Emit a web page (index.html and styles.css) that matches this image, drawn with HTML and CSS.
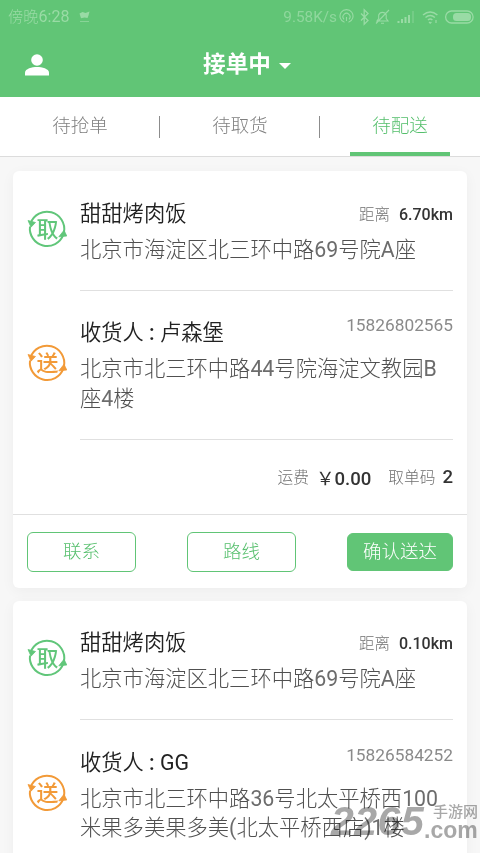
FILE: index.html
```html
<!DOCTYPE html>
<html lang="zh-CN">
<head>
<meta charset="utf-8">
<title>接单中</title>
<link rel="stylesheet" href="styles.css">
</head>
<body>
<svg class="defs" width="0" height="0">
  <symbol id="cycle" viewBox="0 0 40 40">
    <path d="M3.700 14.100A17.300 17.300 0 0 1 37 23M36.300 25.900A17.300 17.300 0 0 1 3 17.500" fill="none" stroke="currentColor" stroke-width="2"/>
    <path d="M1 11.500l7.500 2-4.500 4.700zM37 21.300l2.800 5.700-8 .8z" fill="currentColor" stroke="currentColor" stroke-width=".8" stroke-linejoin="round"/>
  </symbol>
</svg>
<div class="screen">
  <header class="header">
    <div class="status">
      <span class="clock">傍晚<span class="time">6:28</span></span>
      <svg class="flag" width="14" height="14" viewBox="0 0 14 14"><path d="M1.500 3.500l3-1.500 3 1 4-1.500-1 4-1 2.500-3-.5-3.500.8z" fill="currentColor"/><path d="M2 11.500h9" stroke="currentColor" opacity=".7"/></svg>
      <span class="speed">9.58K/s</span>
      <svg class="status-icons" width="136" height="18" viewBox="0 0 136 18" fill="none" stroke="currentColor" stroke-width="1.1">
        <path d="M5.500 14.300a6.500 6.500 0 1 1 4 0M5 11.300a3.500 3.500 0 1 1 5 0M7.500 9v4"/>
        <path d="M22 5.500l7 7-3.800 3.700V1.800L29 5.500l-7 7" stroke-width="1.300"/>
        <path d="M38 13h11l-1.800-2.500V7a4 4 0 0 0-7.500 0v3.500zM42 15.200h3M37 15.500L50 2"/>
        <path d="M59.500 15v-2M63 15v-4M66.500 15V9M70 15V7" stroke-width="2"/><path d="M74 15V3" stroke-width="2" opacity=".35"/>
        <path d="M84 7q7.200-6 14.400 0M86.500 9.500q4.700-4 9.400 0M89 12q2.200-2 4.400 0" stroke-width="1.500"/><path d="M90 14l1.200 1.200L92.400 14M97 12v3" stroke-width="1.200"/>
        <rect x="106.600" y="3" width="27.500" height="12" rx="6" stroke-width="1.300"/><rect x="114" y="5" width="18" height="8" rx="3.500" fill="currentColor" stroke="none"/>
      </svg>
    </div>
    <div class="titlebar">
      <svg class="user" width="26" height="24" viewBox="0 0 26 24" fill="#fff"><circle cx="13" cy="7" r="5.800"/><path d="M1 22.500v-3C1 15.800 8 14 13 14s12 1.800 12 5.500v3z"/></svg>
      <h1 class="title">接单中<i class="caret"></i></h1>
    </div>
  </header>
  <nav class="tabs">
    <a class="tab">待抢单</a>
    <a class="tab">待取货</a>
    <a class="tab active">待配送</a>
  </nav>
  <main class="list">
    <article class="card">
      <section class="stop">
        <svg class="badge pick" width="40" height="40" viewBox="0 0 40 40"><use href="#cycle"/><text x="20.500" y="27.500" text-anchor="middle">取</text></svg>
        <div class="info">
          <div class="row"><h2 class="name">甜甜烤肉饭</h2><p class="meta">距离<b>6.70km</b></p></div>
          <p class="address">北京市海淀区北三环中路<span class="latin">69</span>号院<span class="latin">A</span>座</p>
        </div>
      </section>
      <section class="stop">
        <svg class="badge send" width="40" height="40" viewBox="0 0 40 40"><use href="#cycle"/><text x="20.500" y="27.500" text-anchor="middle">送</text></svg>
        <div class="info">
          <div class="row"><h2 class="name">收货人<span class="colon">:</span>卢森堡</h2><p class="phone">15826802565</p></div>
          <p class="address">北京市北三环中路<span class="latin">44</span>号院海淀文教园<span class="latin">B</span><br>座<span class="latin">4</span>楼</p>
        </div>
      </section>
      <div class="fees"><span>运费</span><b class="fee"><span class="yen">￥</span>0.00</b><span>取单码</span><b class="code">2</b></div>
      <div class="actions">
        <button class="btn">联系</button>
        <button class="btn">路线</button>
        <button class="btn primary">确认送达</button>
      </div>
    </article>
    <article class="card">
      <section class="stop">
        <svg class="badge pick" width="40" height="40" viewBox="0 0 40 40"><use href="#cycle"/><text x="20.500" y="27.500" text-anchor="middle">取</text></svg>
        <div class="info">
          <div class="row"><h2 class="name">甜甜烤肉饭</h2><p class="meta">距离<b>0.10km</b></p></div>
          <p class="address">北京市海淀区北三环中路<span class="latin">69</span>号院<span class="latin">A</span>座</p>
        </div>
      </section>
      <section class="stop">
        <svg class="badge send" width="40" height="40" viewBox="0 0 40 40"><use href="#cycle"/><text x="20.500" y="27.500" text-anchor="middle">送</text></svg>
        <div class="info">
          <div class="row"><h2 class="name">收货人<span class="colon">:</span><span class="latin">GG</span></h2><p class="phone">15826584252</p></div>
          <p class="address">北京市北三环中路<span class="latin">36</span>号北太平桥西<span class="latin">100</span><br>米果多美果多美<span class="latin">(</span>北太平桥西店<span class="latin">)1</span>楼</p>
        </div>
      </section>
    </article>
  </main>
  <div class="watermark">
    <span class="wm-num">2265</span>
    <span class="wm-side"><span class="wm-cn">手游网</span><span class="wm-com">.com</span></span>
  </div>
</div>
</body>
</html>
```
FILE: styles.css
```css
* { box-sizing: border-box; margin: 0; padding: 0; }
body {
  font-family: Roboto, "Noto Sans CJK SC", sans-serif;
  background: #f7f7f7;
  color: #333;
}
.defs { display: block; }
.screen { position: relative; width: 480px; height: 853px; overflow: hidden; }

.header { height: 97px; background: #61c576; }
.status {
  height: 33px;
  display: flex;
  align-items: center;
  padding-left: 8px;
  color: #99dba5;
  font-size: 15.3px;
}
.clock { font-size: 15.3px; font-weight: 300; line-height: 18px; }
.time { font-size: 16px; font-weight: 400; }
.flag { margin-left: 9px; }
.speed { margin-left: auto; font-weight: 400; color: #8fd79d; }
.status-icons { margin: 0 5px 0 2px; }
.titlebar { position: relative; height: 64px; display: flex; justify-content: center; }
.user { position: absolute; left: 24px; top: 20px; }
.title {
  display: flex;
  align-items: center;
  height: 59px;
  padding-left: 14px;
  font-size: 22.6px;
  font-weight: 700;
  color: #fff;
}
.caret {
  margin: 6px 0 0 8px;
  border: 6px solid transparent;
  border-top: 6.5px solid #fff;
  border-bottom: 0;
}

.tabs { height: 60px; display: flex; background: #fff; border-bottom: 1px solid #dcdcdc; }
.tab {
  position: relative;
  flex: 1;
  text-align: center;
  font-size: 18.5px;
  font-weight: 300;
  line-height: 58px;
  color: #808080;
}
.tab + .tab::before {
  content: "";
  position: absolute;
  left: -1px;
  top: 19px;
  width: 1px;
  height: 22px;
  background: #8c8c8c;
}
.tab.active { color: #55bf6c; }
.tab.active::after {
  content: "";
  position: absolute;
  left: 30px;
  right: 30px;
  bottom: 0;
  height: 4px;
  background: #61c576;
}

.list { display: flex; flex-direction: column; gap: 13px; padding: 14px 13px 0; }
.card { background: #fff; border-radius: 6px; box-shadow: 0 3px 14px rgba(0, 0, 0, .045); }
.stop { display: flex; padding-right: 14px; }
.badge { flex: none; align-self: center; margin: 0 13.5px 4px 13.5px; overflow: visible; }
.badge text { font-size: 22px; font-weight: 500; fill: currentColor; }
.pick { color: #61c67a; }
.send { color: #f29a38; }
.info { flex: 1; padding: 26.5px 0 25.5px; border-bottom: 1px solid #e0e0e0; }
.row { display: flex; justify-content: space-between; height: 32px; margin-bottom: 5px; }
.name { font-size: 21.3px; font-weight: 350; line-height: 32px; white-space: nowrap; color: #222; }
.colon { display: inline-block; width: 16px; text-align: center; font-weight: 500; }
.latin { font-weight: 400; }
.meta { font-size: 15.5px; font-weight: 300; line-height: 34px; color: #707070; }
.meta b { margin-left: 9px; font-size: 16px; font-weight: 500; color: #333; }
.phone { font-size: 17.3px; font-weight: 400; line-height: 17px; color: #8a8a8a; }
.address { font-size: 21.3px; font-weight: 300; line-height: 29.5px; color: #505050; white-space: nowrap; }
.address .latin { color: #6c6c6c; }

.fees {
  height: 75px;
  display: flex;
  justify-content: flex-end;
  align-items: center;
  padding-right: 14px;
  border-bottom: 1px solid #e0e0e0;
  font-size: 15.7px;
  font-weight: 300;
  color: #707070;
}
.fees b { font-size: 18.6px; font-weight: 500; color: #333; }
.fee { margin: 0 17px 0 7px; }
.yen { font-weight: 400; }
.code { margin-left: 7px; }
.actions { display: flex; justify-content: space-between; align-items: center; height: 73px; padding: 2px 14px 0; }
.btn {
  width: 109px;
  height: 40px;
  border: 1px solid #61c576;
  border-radius: 6px;
  background: #fff;
  color: #55bf6c;
  font: 300 18.5px/38px Roboto, "Noto Sans CJK SC", sans-serif;
}
.btn.primary { width: 106px; height: 38px; line-height: 36px; background: #61c576; color: #fff; }

.watermark {
  position: absolute;
  left: 331px;
  top: 803px;
  display: flex;
  color: #a8a8a8;
  mix-blend-mode: multiply;
}
.wm-num { width: 96px; font: italic 700 41px/36px "Liberation Sans", sans-serif; letter-spacing: .5px; }
.wm-side { display: flex; flex-direction: column; }
.wm-cn { margin-left: 6px; font-size: 15px; font-weight: 500; line-height: 18px; }
.wm-com { font: 700 23px/18px "Liberation Sans", sans-serif; margin-left: -3px; }
```
